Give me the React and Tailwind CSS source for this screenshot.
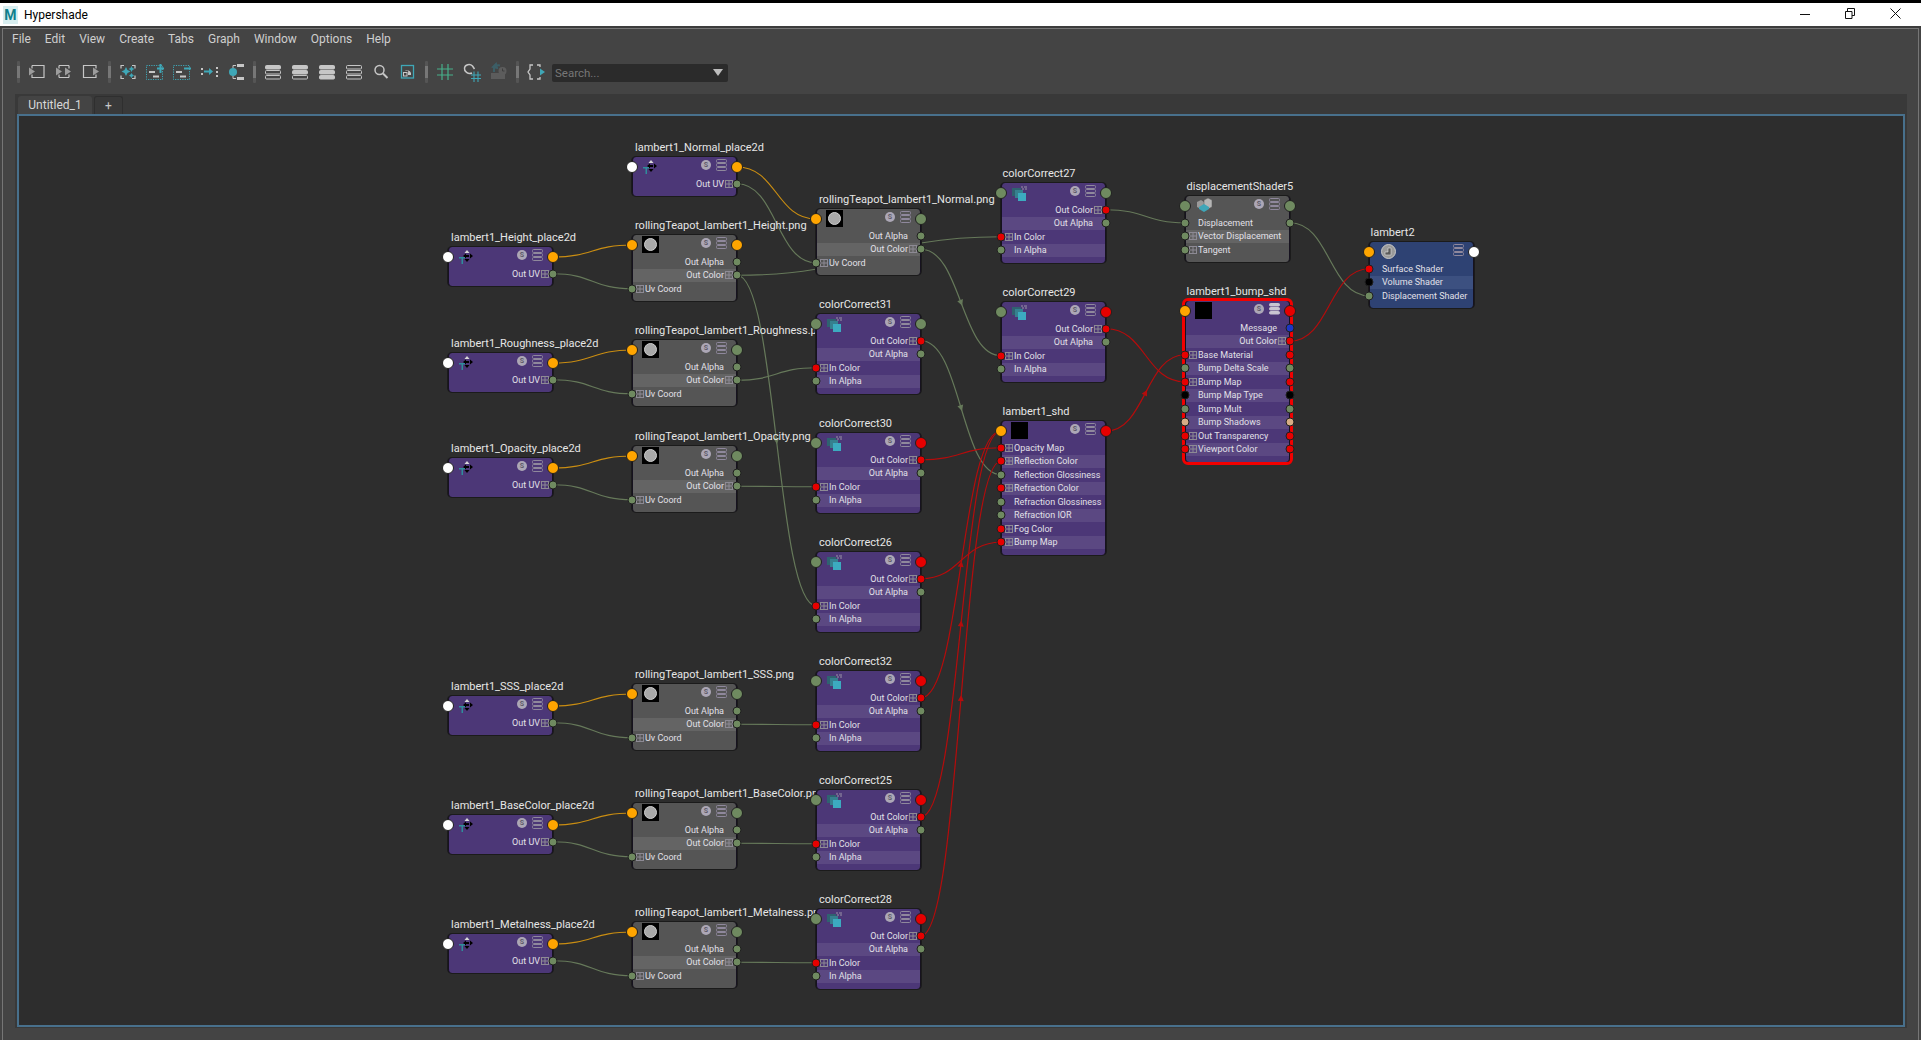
import React from "react";

const FONT = "font-['Roboto','Noto_Sans',sans-serif]";
const OX = 19;
const OY = 116;
const HEADER = 20;
const ROW = 13.5;
const WIDTH = 105;

const socketColors = {
  g: "bg-[#6f8a60]",
  o: "bg-[#ffa500]",
  r: "bg-[#e60000]",
  w: "bg-white",
  k: "bg-black",
  b: "bg-[#1c36c4]",
  t: "bg-[#d6ad85]"
};

const wireColors = { g: "#66795a", o: "#c98d12", r: "#b40c0c" };

const skins = {
  purple: { base: "bg-[#4c3777]", band: "bg-[#5b4882]" },
  grey: { base: "bg-[#555555]", band: "bg-[#646464]" },
  blue: { base: "bg-[#2e4273]", band: "bg-[#3c5080]" }
};

const outUv = [{ text: "Out UV", r: "g", exp: true }];
const pngRows = [
  { text: "Out Alpha", r: "g" },
  { text: "Out Color", r: "g", exp: true },
  { text: "Uv Coord", l: "g", exp: true }
];
const ccRows = [
  { text: "Out Color", r: "r", exp: true },
  { text: "Out Alpha", r: "g" },
  { text: "In Color", l: "r", exp: true },
  { text: "In Alpha", l: "g" }
];

const place = (id, name, y) => ({ id, name, x: 448, y, skin: "purple", icon: "place", hl: "w", hr: "o", rows: outUv });
const png = (id, name, y, hr = "g") => ({ id, name, x: 632, y, skin: "grey", icon: "swatch", hl: "o", hr, rows: pngRows });
const cc = (id, name, x, y, hr = "r") => ({ id, name, x, y, skin: "purple", icon: "cc", hl: "g", hr, rows: ccRows });

const nodes = [
  { ...place("pN", "lambert1_Normal_place2d", 157), x: 632 },
  place("pH", "lambert1_Height_place2d", 247),
  place("pR", "lambert1_Roughness_place2d", 353),
  place("pO", "lambert1_Opacity_place2d", 458),
  place("pS", "lambert1_SSS_place2d", 696),
  place("pB", "lambert1_BaseColor_place2d", 815),
  place("pM", "lambert1_Metalness_place2d", 934),
  png("tH", "rollingTeapot_lambert1_Height.png", 235, "o"),
  png("tR", "rollingTeapot_lambert1_Roughness.png", 340),
  png("tO", "rollingTeapot_lambert1_Opacity.png", 446),
  png("tS", "rollingTeapot_lambert1_SSS.png", 684),
  png("tB", "rollingTeapot_lambert1_BaseColor.png", 803),
  png("tM", "rollingTeapot_lambert1_Metalness.png", 922),
  { ...png("tN", "rollingTeapot_lambert1_Normal.png", 209), x: 816 },
  cc("c27", "colorCorrect27", 1001, 183, "g"),
  cc("c29", "colorCorrect29", 1001, 302),
  cc("c31", "colorCorrect31", 816, 314, "g"),
  cc("c30", "colorCorrect30", 816, 433),
  cc("c26", "colorCorrect26", 816, 552),
  cc("c32", "colorCorrect32", 816, 671),
  cc("c25", "colorCorrect25", 816, 790),
  cc("c28", "colorCorrect28", 816, 909),
  {
    id: "shd", name: "lambert1_shd", x: 1001, y: 421, skin: "purple", icon: "black", hl: "o", hr: "r",
    rows: [
      { text: "Opacity Map", l: "r", exp: true },
      { text: "Reflection Color", l: "r", exp: true },
      { text: "Reflection Glossiness", l: "g" },
      { text: "Refraction Color", l: "r", exp: true },
      { text: "Refraction Glossiness", l: "g" },
      { text: "Refraction IOR", l: "g" },
      { text: "Fog Color", l: "r", exp: true },
      { text: "Bump Map", l: "r", exp: true }
    ]
  },
  {
    id: "disp", name: "displacementShader5", x: 1185, y: 196, skin: "grey", icon: "disp", hl: "g", hr: "g",
    rows: [
      { text: "Displacement", l: "g", r: "g", left: true },
      { text: "Vector Displacement", l: "g", exp: true },
      { text: "Tangent", l: "g", exp: true }
    ]
  },
  {
    id: "bump", name: "lambert1_bump_shd", x: 1185, y: 301, skin: "purple", icon: "black", hl: "o", hr: "r", selected: true, brightList: true,
    rows: [
      { text: "Message", r: "b" },
      { text: "Out Color", r: "r", exp: true },
      { text: "Base Material", l: "r", r: "r", exp: true, left: true },
      { text: "Bump Delta Scale", l: "g", r: "g", left: true },
      { text: "Bump Map", l: "r", r: "r", exp: true, left: true },
      { text: "Bump Map Type", l: "k", r: "k", left: true },
      { text: "Bump Mult", l: "g", r: "g", left: true },
      { text: "Bump Shadows", l: "t", r: "t", left: true },
      { text: "Out Transparency", l: "r", r: "r", exp: true, left: true },
      { text: "Viewport Color", l: "r", r: "r", exp: true, left: true }
    ]
  },
  {
    id: "lam", name: "lambert2", x: 1369, y: 242, skin: "blue", icon: "lambert", hl: "o", hr: "w", noSolo: true,
    rows: [
      { text: "Surface Shader", l: "r" },
      { text: "Volume Shader", l: "k" },
      { text: "Displacement Shader", l: "g" }
    ]
  }
];

const byId = Object.fromEntries(nodes.map(n => [n.id, n]));

// row = -1 is the big socket in the header
const portPos = (id, row, side) => {
  const n = byId[id];
  const y = row < 0 ? n.y + 10 : n.y + HEADER + (row + 0.5) * ROW;
  return { x: (side === "r" ? n.x + WIDTH : n.x) - OX, y: y - OY };
};

const links = [];
const addPlace = (p, t) => {
  links.push({ from: [p, -1], to: [t, -1], c: "o" });
  links.push({ from: [p, 0], to: [t, 2], c: "g" });
};
addPlace("pN", "tN");
addPlace("pH", "tH");
addPlace("pR", "tR");
addPlace("pO", "tO");
addPlace("pS", "tS");
addPlace("pB", "tB");
addPlace("pM", "tM");
links.push(
  { from: ["tH", 1], to: ["c27", 2], c: "g" },
  { from: ["tH", 1], to: ["c26", 2], c: "g", arrow: true },
  { from: ["tN", 1], to: ["c29", 2], c: "g", arrow: true },
  { from: ["tR", 1], to: ["c31", 2], c: "g" },
  { from: ["tO", 1], to: ["c30", 2], c: "g" },
  { from: ["tS", 1], to: ["c32", 2], c: "g" },
  { from: ["tB", 1], to: ["c25", 2], c: "g" },
  { from: ["tM", 1], to: ["c28", 2], c: "g" },
  { from: ["c27", 0], to: ["disp", 0], c: "g" },
  { from: ["disp", 0], to: ["lam", 2], c: "g" },
  { from: ["c31", 0], to: ["shd", 2], c: "g", arrow: true },
  { from: ["c30", 0], to: ["shd", 0], c: "r" },
  { from: ["c26", 0], to: ["shd", 7], c: "r" },
  { from: ["c32", 0], to: ["shd", -1], c: "r", arrow: true },
  { from: ["c25", 0], to: ["shd", -1], c: "r", arrow: true },
  { from: ["c28", 0], to: ["shd", 1], c: "r", arrow: true },
  { from: ["shd", -1], to: ["bump", 2], c: "r", arrow: true },
  { from: ["c29", 0], to: ["bump", 4], c: "r" },
  { from: ["bump", 1], to: ["lam", 0], c: "r" }
);

const Wire = ({ link }) => {
  const a = portPos(link.from[0], link.from[1], "r");
  const b = portPos(link.to[0], link.to[1], "l");
  const d = (b.x - a.x) / 2;
  const path = `M${a.x} ${a.y}C${a.x + d} ${a.y} ${b.x - d} ${b.y} ${b.x} ${b.y}`;
  let arrow = null;
  if (link.arrow) {
    const mx = (a.x + b.x) / 2;
    const my = (a.y + b.y) / 2;
    const tx = b.x - a.x + (b.x - d - (a.x + d));
    const ty = b.y - a.y + (b.y - a.y);
    const len = Math.hypot(tx, ty);
    const ux = tx / len;
    const uy = ty / len;
    const pts = [
      [mx + ux * 3.5, my + uy * 3.5],
      [mx - ux * 2.5 - uy * 3, my - uy * 2.5 + ux * 3],
      [mx - ux * 2.5 + uy * 3, my - uy * 2.5 - ux * 3]
    ];
    arrow = <polygon points={pts.map(p => p.join(",")).join(" ")} fill={wireColors[link.c]} />;
  }
  return (
    <g>
      <path d={path} fill="none" stroke={wireColors[link.c]} strokeWidth="1.2" />
      {arrow}
    </g>
  );
};

const Socket = ({ color, side, top, big }) => (
  <span
    className={`absolute -translate-x-1/2 -translate-y-1/2 rounded-full border border-[#202020] z-10 ${
      big ? "w-[12px] h-[12px]" : "w-[9px] h-[9px]"
    } ${side === "r" ? "left-full" : "left-0"} ${socketColors[color]}`}
    style={{ top }}
  />
);

const ExpandBox = () => (
  <svg width="8" height="8" viewBox="0 0 8 8" className="shrink-0">
    <rect x="0.5" y="0.5" width="7" height="7" fill="none" stroke="#8d8a94" />
    <path d="M4 1v6M1 4h6" stroke="#8d8a94" />
  </svg>
);

const ListIcon = ({ bright }) => (
  <svg width="11" height="12" viewBox="0 0 11 12" className="shrink-0">
    {[0.5, 4.5, 8.5].map(y => (
      <rect key={y} x="0.5" y={y} width="10" height={bright ? 2.5 : 3} rx="1" fill={bright ? "#c9c5d1" : "none"} stroke={bright ? "#c9c5d1" : "#8f889c"} />
    ))}
  </svg>
);

const NodeIcon = ({ type }) => {
  if (type === "place") {
    return (
      <svg width="16" height="14" viewBox="0 0 16 14" className="ml-[9px] mt-[3px] shrink-0">
        <path d="M5 6L8 3.500V8.500zM15 6l-3-2.500v5z" fill="#000" />
        <path d="M7 5h4v2H7z" fill="#000" />
        <path d="M9 0l2.500 3h-5z" fill="#d8d8d8" />
        <path d="M9 12l-2.500-3h5z" fill="#000" />
        <path d="M1 7h6v1.500H5V14H3.500V8.500H1z" fill="#2f8d9c" />
      </svg>
    );
  }
  if (type === "cc") {
    return (
      <svg width="16" height="15" viewBox="0 0 16 15" className="ml-[10px] mt-[3px] shrink-0">
        <rect x="0" y="2" width="9" height="8" fill="#2f6270" />
        <rect x="3" y="4" width="8" height="8" fill="#36808f" />
        <rect x="6" y="7" width="8" height="8" fill="#3cabc0" />
        <path d="M9 1h2M12 1h3M10 3h2M13 3h2" stroke="#9a95a8" strokeWidth="1" />
      </svg>
    );
  }
  if (type === "swatch") {
    return (
      <span className="ml-[9px] mt-[1px] w-[17px] h-[17px] bg-black flex items-center justify-center shrink-0">
        <span className="w-[13px] h-[13px] rounded-full bg-[#a9a9a9] border border-[#cfcfcf]" />
      </span>
    );
  }
  if (type === "black") {
    return <span className="ml-[9px] mt-[1px] w-[17px] h-[17px] bg-black shrink-0" />;
  }
  if (type === "disp") {
    return (
      <svg width="17" height="14" viewBox="0 0 17 14" className="ml-[10px] mt-[2px] shrink-0">
        <path d="M1 4l4-2 3 2v5l-3 2-4-2z" fill="#9a9a9a" />
        <path d="M8 2l4-2 4 2v7l-4 2-4-2z" fill="#b5b5b5" stroke="#555" strokeWidth="0.5" />
        <path d="M3 9l5-3 5 3v2l-5 3-5-3z" fill="#3fa6b8" />
      </svg>
    );
  }
  if (type === "lambert") {
    return (
      <svg width="15" height="15" viewBox="0 0 15 15" className="ml-[11px] mt-[2px] shrink-0">
        <circle cx="7.500" cy="7.500" r="7" fill="#9a9a9a" stroke="#c8c8c8" />
        <path d="M4 11V8h3V4h3v7z" fill="#5a5a5a" stroke="#ddd" strokeWidth="0.6" />
      </svg>
    );
  }
  return null;
};

const Row = ({ row, band, skin }) => {
  const isLeft = row.left || !row.r;
  return (
    <div className={`relative h-[13.5px] flex items-center text-[9px] leading-none text-[#e2e0e8] whitespace-nowrap ${band ? skin.band : skin.base}`}>
      {isLeft ? (
        <div className="flex items-center pl-[3px]">
          <span className="w-[9px] shrink-0">{row.exp && <ExpandBox />}</span>
          <span className="pt-px">{row.text}</span>
        </div>
      ) : (
        <div className="flex items-center justify-end w-full pr-[3px]">
          <span className="pt-px">{row.text}</span>
          <span className="w-[9px] pl-px shrink-0">{row.exp && <ExpandBox />}</span>
        </div>
      )}
    </div>
  );
};

const Node = ({ node }) => {
  const skin = skins[node.skin];
  return (
    <div
      className={`absolute w-[105px] ${
        node.selected ? "outline-[3px] outline-solid outline-[#f20000] rounded-[3px]" : ""
      }`}
      style={{ left: node.x - OX, top: node.y - OY }}
    >
      <div className={`rounded-[4px] overflow-hidden border-x border-[#16121f] shadow-[0_0_0_1px_#1b1b1b] ${skin.base}`}>
        <div className="h-[20px] flex items-start">
          <NodeIcon type={node.icon} />
          <div className="ml-auto flex items-center gap-[5px] pr-[9px] pt-[2px]">
            {!node.noSolo && (
              <span className="w-[10px] h-[10px] rounded-full bg-[#aca7b6] text-[7px] leading-[10px] font-bold text-center text-[#5e5a68]">S</span>
            )}
            <ListIcon bright={node.brightList} />
          </div>
        </div>
        {node.rows.map((row, i) => (
          <Row key={row.text} row={row} band={i % 2 === 1} skin={skin} />
        ))}
        <div className="h-[5.5px]" />
      </div>
      <Socket color={node.hl} side="l" top={10} big />
      <Socket color={node.hr} side="r" top={10} big />
      {node.rows.map((row, i) => (
        <React.Fragment key={row.text}>
          {row.l && <Socket color={row.l} side="l" top={HEADER + (i + 0.5) * ROW} />}
          {row.r && <Socket color={row.r} side="r" top={HEADER + (i + 0.5) * ROW} />}
        </React.Fragment>
      ))}
    </div>
  );
};

const NodeLabel = ({ node }) => (
  <div
    className="absolute text-[11px] leading-[14px] text-[#e6e6e6] whitespace-nowrap"
    style={{ left: node.x - OX + (node.x >= 1000 ? 1.5 : 3), top: node.y - OY - 16 }}
  >
    {node.name}
  </div>
);

const G = "#c6c6c6";
const T = "#3fa7b7";

const ToolIcon = ({ children }) => (
  <span className="w-[27px] h-[24px] flex items-center justify-center shrink-0">
    <svg width="22" height="20" viewBox="0 0 22 20">
      {children}
    </svg>
  </span>
);

const Sep = () => (
  <span className="w-[10px] h-[24px] flex items-center justify-center shrink-0">
    <span className="w-[3px] h-[22px] bg-[#777] rounded-[1px] border-y-[5px] border-[#555]" />
  </span>
);

const Bars = ({ fills }) => (
  <ToolIcon>
    {fills.map((f, i) => (
      <rect key={i} x="3.500" y={3.5 + i * 5} width="15" height="3.500" rx="1" fill={f ? G : "none"} stroke={G} />
    ))}
  </ToolIcon>
);

const Toolbar = () => (
  <div className="h-[46px] flex items-center pl-[10px] pt-[2px]">
    <Sep />
    <ToolIcon>
      <path d="M6 3.500h12v12H6v-3M6 6.500v-3" fill="none" stroke={G} strokeWidth="1.2" />
      <path d="M3 5.500l6 4-6 4z" fill="#9c9c9c" />
    </ToolIcon>
    <ToolIcon>
      <path d="M6 3.500h10M6 15.500h10M6 3.500v3M6 12.500v3M16 3.500v3M16 12.500v3" fill="none" stroke={G} strokeWidth="1.2" />
      <path d="M3 5.500l6 4-6 4zM12 5.500l6 4-6 4z" fill="#9c9c9c" />
    </ToolIcon>
    <ToolIcon>
      <path d="M16 6.500v-3H3.500v12H16v-3" fill="none" stroke={G} strokeWidth="1.2" />
      <path d="M13 5.500l6 4-6 4z" fill="#9c9c9c" />
    </ToolIcon>
    <Sep />
    <ToolIcon>
      <path d="M7 3.500H4v3M15 3.500h3v3M7 16.500H4v-3M15 16.500h3v-3" fill="none" stroke={G} strokeWidth="1.2" />
      <path d="M9 5l1.500 3 3 1.500-3 1.500L9 14l-1.500-3-3-1.500 3-1.500z" fill={T} />
      <path d="M14.500 4l1 2 2 1-2 1-1 2-1-2-2-1 2-1zM14.500 11l1 1.500 1.500 1-1.500 1-1 1.500-1-1.500-1.500-1 1.500-1z" fill={T} />
    </ToolIcon>
    <ToolIcon>
      <rect x="2.500" y="3.500" width="16" height="14" fill="none" stroke={T} strokeDasharray="1.200 1.200" />
      <path d="M5 9h6v2H5zM9 13.500h6v2H9z" fill={G} />
      <path d="M13 5.500h7v2h-7zM15.500 2h2v9h-2z" fill={T} />
    </ToolIcon>
    <ToolIcon>
      <rect x="2.500" y="3.500" width="16" height="14" fill="none" stroke={T} strokeDasharray="1.200 1.200" />
      <path d="M5 9h6v2H5zM9 13.500h6v2H9z" fill={G} />
      <path d="M13 5.500h7v2h-7z" fill={T} />
    </ToolIcon>
    <ToolIcon>
      <path d="M3 6h2v2H3zM3 11h2v2H3zM18 5h2v2h-2zM18 9h2v2h-2zM18 13h2v2h-2z" fill={G} />
      <path d="M6 8.500h5V6l4 3.500-4 3.500v-2.500H6z" fill={T} />
    </ToolIcon>
    <ToolIcon>
      <circle cx="8" cy="10" r="4" fill={T} />
      <path d="M8 6V3.500h3M8 14v2.500h3" fill="none" stroke={G} />
      <path d="M12 2h7v3h-7zM12 15h7v3h-7z" fill={G} />
    </ToolIcon>
    <Sep />
    <Bars fills={[1, 0, 0]} />
    <Bars fills={[1, 1, 0]} />
    <Bars fills={[1, 1, 1]} />
    <Bars fills={[0, 0, 0]} />
    <ToolIcon>
      <circle cx="9.500" cy="8" r="4.500" fill="none" stroke={G} strokeWidth="1.500" />
      <path d="M13 11.500l4.500 4.500" stroke={G} strokeWidth="2" />
    </ToolIcon>
    <ToolIcon>
      <rect x="4.500" y="3.500" width="12" height="12.500" fill="none" stroke={T} strokeWidth="1.300" />
      <rect x="6.500" y="10.500" width="3.500" height="3.500" fill="none" stroke={G} />
      <path d="M8 9a4 4 0 0 1 6 2v2h-3v-2a1.500 1.500 0 0 0-3-2z" fill={G} />
    </ToolIcon>
    <Sep />
    <ToolIcon>
      <path d="M3 7h16M3 13h16M8 2v16M14 2v16" fill="none" stroke="#46b08a" strokeWidth="1.200" />
    </ToolIcon>
    <ToolIcon>
      <path d="M11 11C7 13 3 9 3.500 6 4 2.500 9 1.500 11.500 4l2 3" fill="none" stroke={G} strokeWidth="1.500" />
      <path d="M10 13h10M10 16.500h10M13 9.500V20M17 9.500V20" fill="none" stroke={T} strokeWidth="1.100" />
    </ToolIcon>
    <ToolIcon>
      <path d="M3 11h14v6H3z" fill="#5c5c5c" />
      <path d="M6 10V6.500C6 4 9 2.500 12 3.500M5 5l3-3 1 4z" fill="none" stroke="#3c5e66" strokeWidth="2" />
      <circle cx="14.500" cy="9" r="4" fill="#5c5c5c" />
      <path d="M14.500 6.500V9h2" stroke="#3e3e3e" fill="none" />
    </ToolIcon>
    <Sep />
    <ToolIcon>
      <path d="M8 3H5v4l-2 3 2 3v4h3M12 3h3v2M12 17h3v-2" fill="none" stroke={G} strokeWidth="1.300" />
      <path d="M15 6.500l5 3.500-5 3.500z" fill={T} />
    </ToolIcon>
    <div className="w-[176px] h-[18px] ml-[3px] mt-[1px] bg-[#2b2b2b] rounded-[2px] flex items-center justify-between pl-[3px] pr-[5px]">
      <span className="text-[11.500px] pt-[2px] text-[#777]">Search...</span>
      <svg width="10" height="7" viewBox="0 0 10 7">
        <path d="M0 0h10L5 7z" fill="#bdbdbd" />
      </svg>
    </div>
  </div>
);

const menus = ["File", "Edit", "View", "Create", "Tabs", "Graph", "Window", "Options", "Help"];

const App = () => (
  <div className={`w-[1921px] h-[1040px] overflow-hidden flex flex-col bg-black ${FONT}`}>
    <div className="h-[3px] shrink-0" />
    <div className="h-[23px] shrink-0 bg-white flex items-center">
      <span className="ml-[3px] w-[15px] h-[18px] bg-[#d8eef0] text-[#0f7f8c] text-[14px] leading-[18px] font-bold text-center">M</span>
      <span className="ml-[6px] pt-px text-[12px] text-black">Hypershade</span>
      <div className="ml-auto flex items-center pb-[2px]">
        <svg width="10" height="10" viewBox="0 0 10 10" className="mr-[35px]">
          <path d="M0 5.500h10" stroke="#111" />
        </svg>
        <svg width="10" height="11" viewBox="0 0 10 11" className="mr-[35px]">
          <path d="M0.500 3.500h6.500v7H0.500zM2.500 3.500V0.500h7v7H7" fill="none" stroke="#111" />
        </svg>
        <svg width="11" height="11" viewBox="0 0 11 11" className="mr-[20px]">
          <path d="M0.500 0.500l10 10M10.500 0.500l-10 10" stroke="#111" />
        </svg>
      </div>
    </div>
    <div className="h-[2px] shrink-0 bg-[#3c3c3c]" />
    <div className="flex-1 bg-[#444444] flex flex-col">
      <div className="mx-[2px] flex-1 flex flex-col border-x border-t border-[#767676] min-h-0">
        <div className="h-[19px] flex items-center pl-[9px] gap-[14px] text-[12px] text-[#cfcfcf]">
          {menus.map(m => (
            <span key={m}>{m}</span>
          ))}
        </div>
        <Toolbar />
        <div className="ml-[12px] mr-[11px] h-[934px] bg-[#393939] px-[2px] flex flex-col shrink-0">
          <div className="h-[20px] flex items-end pl-px gap-[2px] shrink-0">
            <div className="w-[74px] h-[18px] bg-[#444444] rounded-t-[3px] flex items-center justify-center text-[12px] text-[#d8d8d8]">Untitled_1</div>
            <div className="w-[29px] h-[18px] border-x border-t border-[#2f2f2f] rounded-t-[3px] flex items-center justify-center text-[12px] text-[#c8c8c8]">+</div>
          </div>
          <div className="relative h-[913px] border-2 border-[#48708c] bg-[#2d2d2d] overflow-hidden">
            <svg className="absolute left-0 top-0 w-full h-full">
              {links.map((link, i) => (
                <Wire key={i} link={link} />
              ))}
            </svg>
            {nodes.map(n => (
              <NodeLabel key={n.id} node={n} />
            ))}
            {nodes.map(n => (
              <Node key={n.id} node={n} />
            ))}
          </div>
        </div>
      </div>
    </div>
  </div>
);

export default App;
